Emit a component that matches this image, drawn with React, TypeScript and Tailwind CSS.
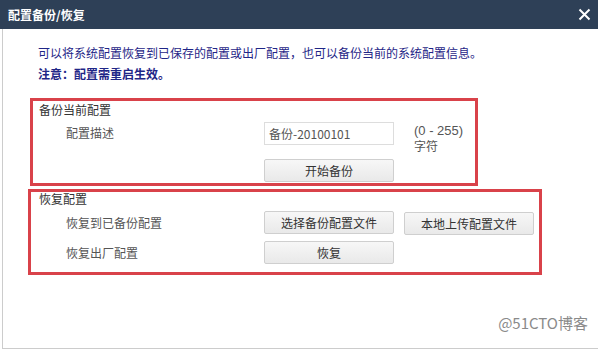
import React from 'react';

const font = { fontFamily: '"Noto Sans CJK SC", "Liberation Sans", sans-serif' };

function Btn({ children, w = 'w-[130px]' }: { children: React.ReactNode; w?: string }) {
  return (
    <button
      className={`${w} h-[23px] rounded-[2px] border border-[#cfcfcf] bg-gradient-to-b from-[#f7f7f7] to-[#e9e9e9] text-[12px] leading-[21px] text-[#333]`}
    >
      {children}
    </button>
  );
}

export default function App() {
  return (
    <div className="w-[598px] h-[349px] bg-white overflow-hidden flex flex-col" style={font}>
      {/* title bar */}
      <div className="h-[29px] bg-[#2e4057] flex items-center justify-between pl-[8px] pr-[6px] shrink-0">
        <span className="text-white text-[12px] font-bold">配置备份/恢复</span>
        <svg width="13" height="13" viewBox="0 0 13 13" className="mr-[1px]">
          <path d="M1.5 1.5 L11.5 11.5 M11.5 1.5 L1.5 11.5" stroke="#fff" strokeWidth="2" />
        </svg>
      </div>

      <div className="flex-1 ml-[2px] border-l border-b border-[#cccccc] flex flex-col">
        {/* description */}
        <div className="pl-[35px] pt-[13px] text-[12px] leading-[21px] text-[#1f2687]">
          <p>可以将系统配置恢复到已保存的配置或出厂配置，也可以备份当前的系统配置信息。</p>
          <p className="font-bold">注意：配置需重启生效。</p>
        </div>

        {/* backup box */}
        <div className="ml-[27px] mt-[14px] w-[448px] border-[3px] border-[#d9424a] pb-[1px]">
          <div className="pl-[6px] pt-[1px] text-[12px] leading-[16px] text-[#333]">备份当前配置</div>
          <div className="flex mt-[4px]">
            <div className="w-[231px] pl-[33px] pt-[4px] text-[12px] leading-[14px] text-[#555]">配置描述</div>
            <div className="w-[130px] h-[23px] border border-[#dddddd] pl-[4px] text-[12px] leading-[21px] text-[#555]">
              备份-20100101
            </div>
            <div className="ml-[20px] pt-[1px] text-[12px] leading-[16px] text-[#555]">
              <div className="font-['Liberation_Sans',sans-serif] text-[13px]">(0 - 255)</div>
              <div className="-mt-[1px]">字符</div>
            </div>
          </div>
          <div className="flex mt-[5px]">
            <div className="w-[231px]" />
            <Btn>开始备份</Btn>
          </div>
        </div>

        {/* restore box */}
        <div className="ml-[25px] mt-[3px] w-[514px] border-[3px] border-[#d9424a] pb-[8px]">
          <div className="pl-[8px] text-[12px] leading-[14px] text-[#333]">恢复配置</div>
          <div className="flex items-center mt-[4px]">
            <div className="w-[233px] pl-[35px] text-[12px] text-[#555]">恢复到已备份配置</div>
            <Btn>选择备份配置文件</Btn>
            <div className="ml-[10px]">
              <Btn>本地上传配置文件</Btn>
            </div>
          </div>
          <div className="flex items-center mt-[6px]">
            <div className="w-[233px] pl-[35px] text-[12px] text-[#555]">恢复出厂配置</div>
            <Btn>恢复</Btn>
          </div>
        </div>

        <div className="flex-1 flex items-end justify-end pr-[10px] pb-[14px]">
          <span className="text-[15px] text-[#8a8a8a]">@51CTO博客</span>
        </div>
      </div>
    </div>
  );
}
